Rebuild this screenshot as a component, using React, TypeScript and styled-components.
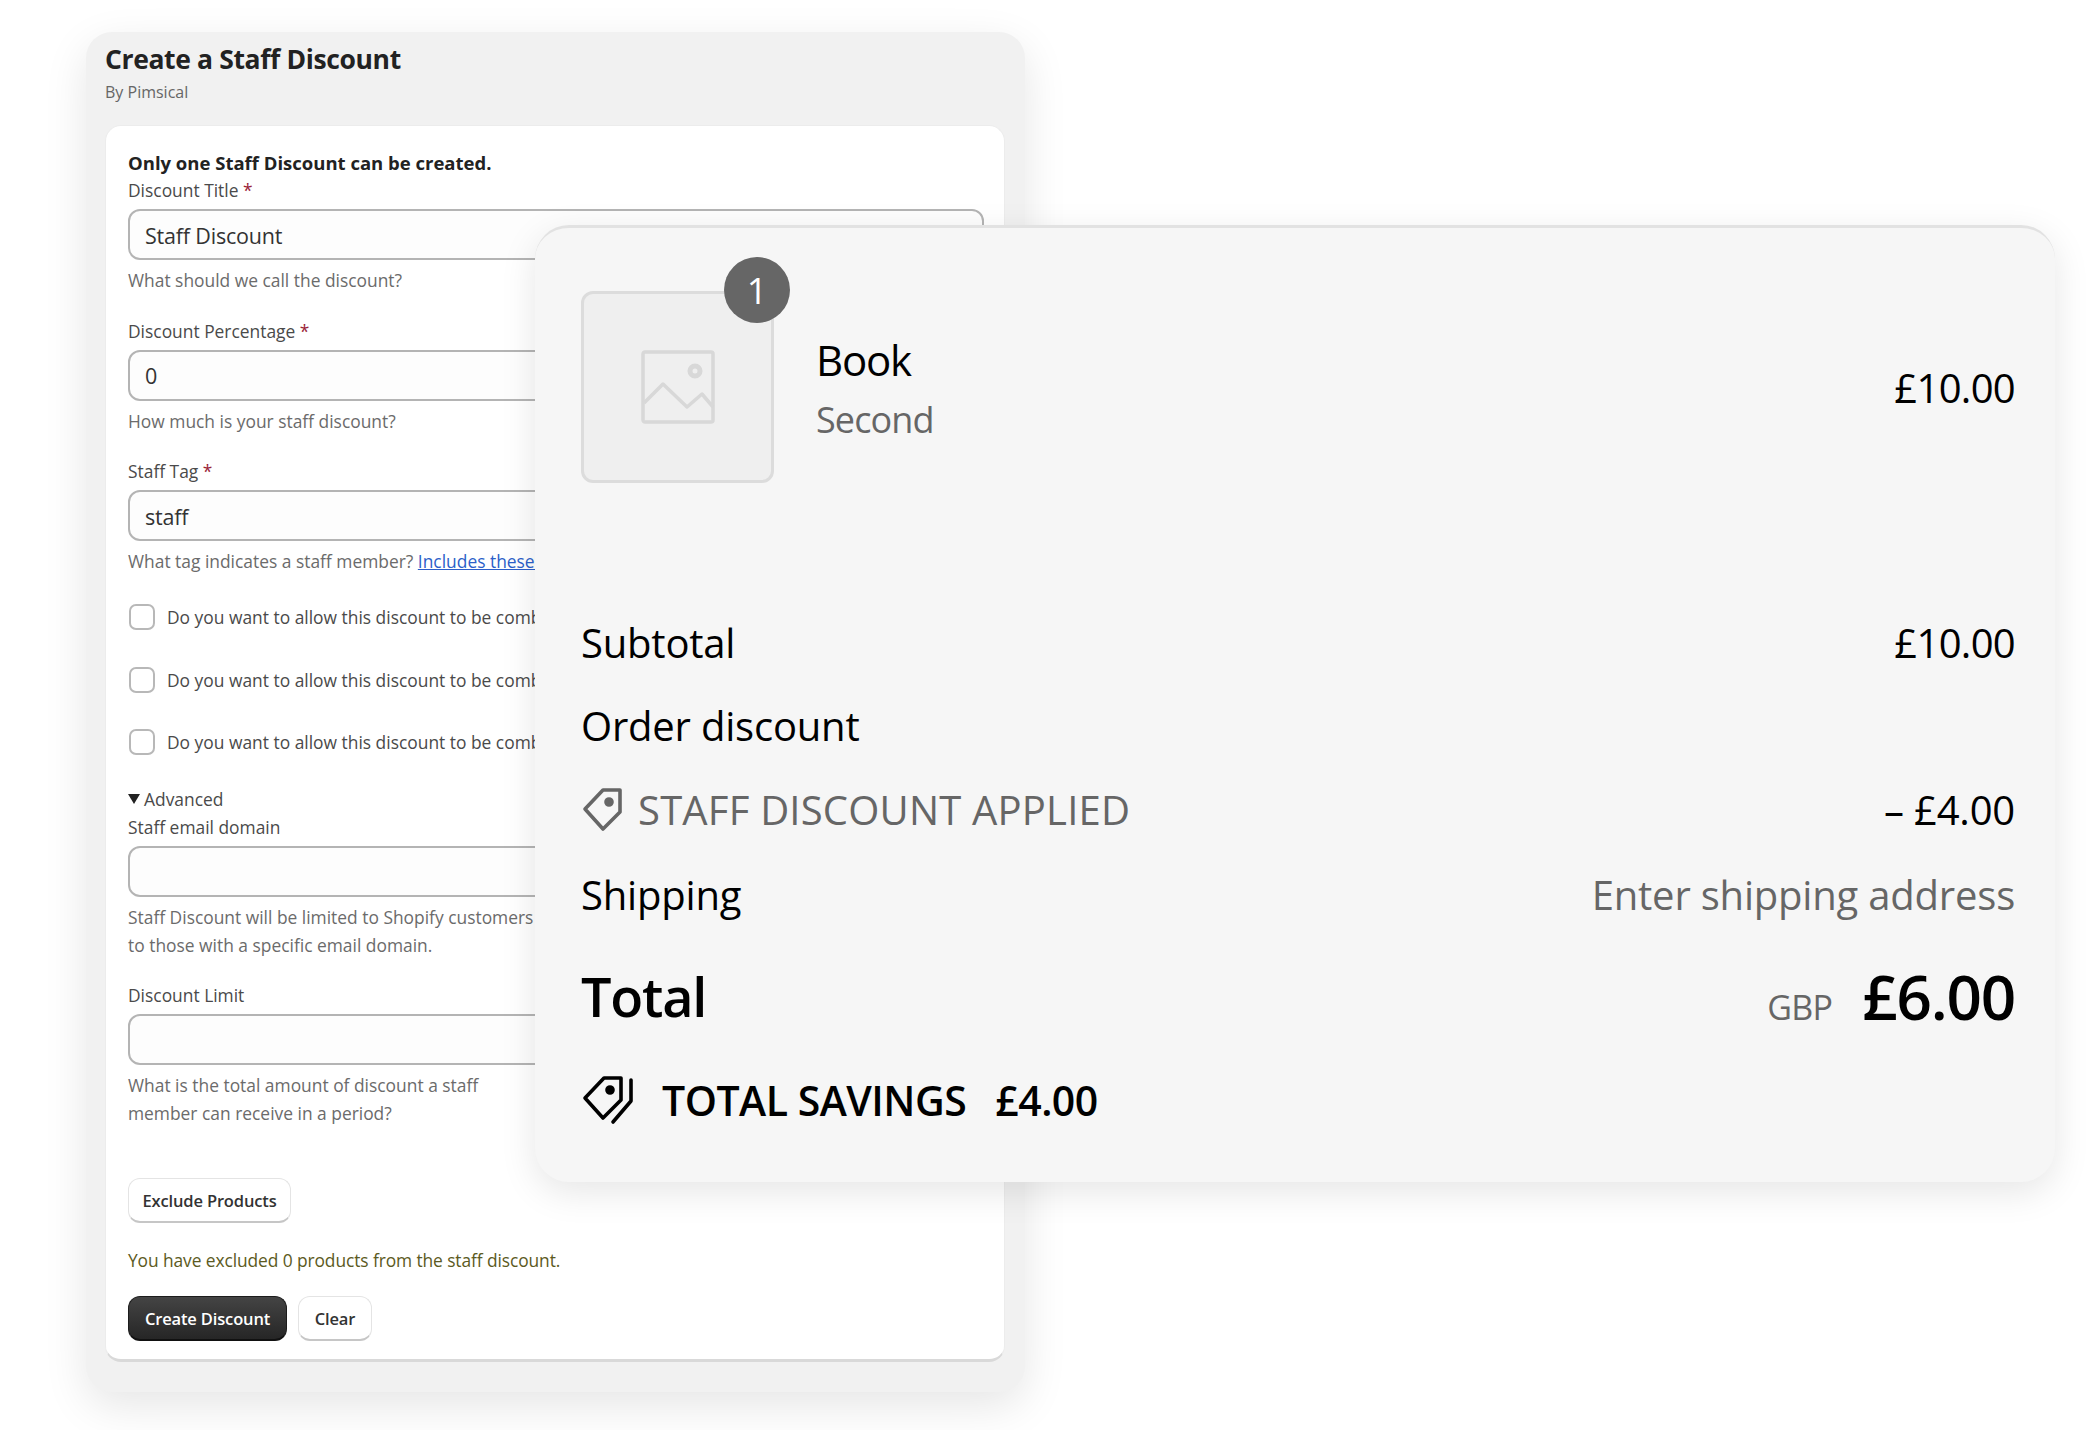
import React from "react";
import styled, { createGlobalStyle } from "styled-components";

const Global = createGlobalStyle`
  html, body { margin: 0; padding: 0; background: #fff; }
  body { font-family: "Open Sans", "Noto Sans", sans-serif; width: 2090px; height: 1430px; overflow: hidden; }
  * { box-sizing: border-box; }
`;

const Page = styled.div`
  position: relative;
  width: 2090px;
  height: 1430px;
  padding: 32px 0 0 86px;
  background: #fff;
`;

const Panel = styled.section`
  width: 939px;
  height: 1360px;
  padding: 10px 20px 0 19px;
  background: #f1f1f1;
  border-radius: 26px;
  box-shadow: 0 14px 44px rgba(0, 0, 0, 0.1);
`;

const Title = styled.h1`
  margin: 0;
  font-size: 26.5px;
  line-height: 34px;
  font-weight: 700;
  letter-spacing: -0.37px;
  color: #222;
`;

const By = styled.div`
  margin-top: 3px;
  font-size: 16px;
  line-height: 26px;
  color: #666;
`;

const Card = styled.div`
  margin-top: 20px;
  width: 900px;
  height: 1237px;
  padding: 23px 20px 0 22px;
  background: #fff;
  border-radius: 16px;
  border: 1px solid #ececec;
  border-bottom: 3px solid #d9d9d9;
`;

const Notice = styled.div`
  font-size: 18.5px;
  line-height: 27px;
  font-weight: 700;
  color: #222;
`;

const Field = styled.div<{ $gap?: number }>`
  margin-bottom: ${(p) => p.$gap ?? 22.5}px;
`;

const Label = styled.label`
  display: block;
  font-size: 17.4px;
  line-height: 28px;
  color: #4a4a4a;
`;

const Star = styled.span`
  color: #9a2338;
`;

const Input = styled.div`
  margin-top: 5px;
  height: 51px;
  padding: 1px 15px 0;
  display: flex;
  align-items: center;
  font-size: 21.5px;
  letter-spacing: -0.2px;
  color: #333;
  background: #fdfdfd;
  border: 2px solid #b4b4b4;
  border-radius: 12px;
`;

const Help = styled.div`
  margin-top: 6px;
  font-size: 17.4px;
  line-height: 28px;
  color: #6b6b6b;
`;

const Link = styled.a`
  color: #2c5fc9;
  text-decoration: underline;
`;

const CheckRow = styled.div`
  display: flex;
  align-items: center;
  gap: 12px;
  height: 30px;
  margin: 0 0 32.5px 1px;
  font-size: 17.4px;
  color: #4a4a4a;
  white-space: nowrap;
`;

const Box = styled.span`
  flex: none;
  width: 26px;
  height: 26px;
  background: #fff;
  border: 2px solid #b8b8b8;
  border-radius: 7px;
`;

const Summary = styled.div`
  display: flex;
  align-items: center;
  gap: 4px;
  margin: -5px 0 0;
  font-size: 17.4px;
  line-height: 28px;
  color: #4a4a4a;
`;

const Caret = styled.span`
  width: 0;
  height: 0;
  border-left: 6px solid transparent;
  border-right: 6px solid transparent;
  border-top: 10px solid #222;
`;

const Btn = styled.button<{ $dark?: boolean; $w: number }>`
  display: block;
  flex: none;
  width: ${(p) => p.$w}px;
  height: 45px;
  padding: 0;
  font-family: inherit;
  font-size: 16.5px;
  font-weight: 600;
  letter-spacing: -0.15px;
  border-radius: 12px;
  color: ${(p) => (p.$dark ? "#fff" : "#333")};
  background: ${(p) => (p.$dark ? "linear-gradient(#444, #262626)" : "#fff")};
  border: ${(p) => (p.$dark ? "1px solid #1c1c1c" : "1px solid #e4e4e4")};
  border-bottom: ${(p) => (p.$dark ? "2px solid #111" : "2px solid #c6c6c6")};
`;

const Excluded = styled.div`
  margin: 23px 0 22px;
  font-size: 17.4px;
  line-height: 28px;
  letter-spacing: -0.1px;
  color: #5c5a22;
`;

const BtnRow = styled.div`
  display: flex;
  gap: 11px;
`;

const Overlay = styled.aside`
  position: absolute;
  left: 535px;
  top: 225px;
  width: 1520px;
  height: 957px;
  padding: 63px 40px 0 46px;
  background: #f6f6f6;
  border-top: 3px solid #e2e2e2;
  border-radius: 34px;
  box-shadow: 0 10px 36px rgba(0, 0, 0, 0.1);
  color: #000;
`;

const Item = styled.div`
  display: flex;
  align-items: center;
  height: 192px;
`;

const Thumb = styled.div`
  position: relative;
  flex: none;
  width: 193px;
  height: 192px;
  display: flex;
  align-items: center;
  justify-content: center;
  background: #efefef;
  border: 3px solid #dcdcdc;
  border-radius: 12px;
`;

const Badge = styled.span`
  position: absolute;
  top: -37px;
  right: -19px;
  width: 66px;
  height: 66px;
  display: flex;
  align-items: center;
  justify-content: center;
  border-radius: 50%;
  background: #666;
  color: #fff;
  font-size: 36px;
`;

const ItemText = styled.div`
  margin-left: 42px;
  padding-top: 6px;
  flex: 1;
`;

const ItemName = styled.div`
  font-size: 42px;
  line-height: 60px;
  letter-spacing: -1.2px;
`;

const ItemVariant = styled.div`
  font-size: 36px;
  line-height: 60px;
  letter-spacing: -0.9px;
  color: #666;
`;

const ItemPrice = styled.span`
  font-size: 40px;
  letter-spacing: -0.7px;
`;

const Rows = styled.div`
  margin-top: 118px;
`;

const Row = styled.div<{ $h: number }>`
  display: flex;
  align-items: center;
  justify-content: space-between;
  height: ${(p) => p.$h}px;
  font-size: 40px;
  letter-spacing: -0.2px;
`;

const Price = styled.span`
  letter-spacing: -0.7px;
`;

const Muted = styled.span`
  color: #666;
`;

const RowLabel = styled.span`
  display: flex;
  align-items: center;
  gap: 16px;
  color: #666;
  letter-spacing: 0.2px;
`;

const TotalLabel = styled.span`
  font-size: 54px;
  font-weight: 600;
  letter-spacing: -1.2px;
`;

const TotalValue = styled.span`
  display: flex;
  align-items: baseline;
  gap: 30px;
`;

const Currency = styled.span`
  font-size: 34px;
  letter-spacing: -0.7px;
  color: #666;
`;

const TotalPrice = styled.span`
  font-size: 62px;
  font-weight: 600;
  letter-spacing: -1.2px;
`;

const Savings = styled.div`
  display: flex;
  align-items: center;
  height: 60px;
  margin-top: 16px;
  font-size: 41px;
  font-weight: 600;
  letter-spacing: -0.5px;
`;

const SavingsLabel = styled.span`
  margin: 0 29px 0 29px;
`;

const ImageIcon = () => (
  <svg width="74" height="74" viewBox="0 0 74 74" fill="none" stroke="#d8d8d8" strokeWidth="3.5" strokeLinejoin="round">
    <rect x="2" y="2" width="70" height="70" rx="2" />
    <path d="M3 53 L22 34 L46 57 L61 44 L72 57" />
    <circle cx="54" cy="21" r="5" strokeWidth="5" />
  </svg>
);

const TagIcon = () => (
  <svg width="41" height="44" viewBox="0 0 41 44" fill="none" stroke="#666" strokeWidth="3.6" strokeLinejoin="round">
    <path d="M39 2 H22 L4 21 L22 41 L39 24 Z" />
    <circle cx="28" cy="14" r="3" fill="#666" />
  </svg>
);

const TagsIcon = () => (
  <svg width="52" height="49" viewBox="0 0 52 49" fill="none" stroke="#000" strokeWidth="3.6" strokeLinejoin="round" strokeLinecap="round">
    <path d="M40 2 H23 L4 22 L22 42 L40 24 Z" />
    <path d="M50 4 V25 L32 46" />
    <circle cx="29" cy="14" r="3" fill="#000" />
  </svg>
);

const comboText = "Do you want to allow this discount to be combined with other discounts?";

export default function App() {
  return (
    <Page>
      <Global />
      <Panel>
        <Title>Create a Staff Discount</Title>
        <By>By Pimsical</By>
        <Card>
          <Notice>Only one Staff Discount can be created.</Notice>
          <Field>
            <Label>Discount Title <Star>*</Star></Label>
            <Input>Staff Discount</Input>
            <Help>What should we call the discount?</Help>
          </Field>
          <Field>
            <Label>Discount Percentage <Star>*</Star></Label>
            <Input>0</Input>
            <Help>How much is your staff discount?</Help>
          </Field>
          <Field $gap={27}>
            <Label>Staff Tag <Star>*</Star></Label>
            <Input>staff</Input>
            <Help>What tag indicates a staff member? <Link>Includes these tags</Link></Help>
          </Field>
          <CheckRow><Box />{comboText}</CheckRow>
          <CheckRow><Box />{comboText}</CheckRow>
          <CheckRow><Box />{comboText}</CheckRow>
          <Summary><Caret />Advanced</Summary>
          <Field>
            <Label>Staff email domain</Label>
            <Input />
            <Help>
              Staff Discount will be limited to Shopify customers
              <br />
              to those with a specific email domain.
            </Help>
          </Field>
          <Field $gap={51}>
            <Label>Discount Limit</Label>
            <Input />
            <Help>
              What is the total amount of discount a staff
              <br />
              member can receive in a period?
            </Help>
          </Field>
          <Btn $w={163}>Exclude Products</Btn>
          <Excluded>You have excluded 0 products from the staff discount.</Excluded>
          <BtnRow>
            <Btn $dark $w={159}>Create Discount</Btn>
            <Btn $w={74}>Clear</Btn>
          </BtnRow>
        </Card>
      </Panel>
      <Overlay>
        <Item>
          <Thumb>
            <ImageIcon />
            <Badge>1</Badge>
          </Thumb>
          <ItemText>
            <ItemName>Book</ItemName>
            <ItemVariant>Second</ItemVariant>
          </ItemText>
          <ItemPrice>£10.00</ItemPrice>
        </Item>
        <Rows>
          <Row $h={83}>Subtotal<Price>£10.00</Price></Row>
          <Row $h={83}>Order discount</Row>
          <Row $h={85}>
            <RowLabel><TagIcon />STAFF DISCOUNT APPLIED</RowLabel>
            <span>– £4.00</span>
          </Row>
          <Row $h={85}>Shipping<Muted>Enter shipping address</Muted></Row>
          <Row $h={117}>
            <TotalLabel>Total</TotalLabel>
            <TotalValue><Currency>GBP</Currency><TotalPrice>£6.00</TotalPrice></TotalValue>
          </Row>
          <Savings>
            <TagsIcon />
            <SavingsLabel>TOTAL SAVINGS</SavingsLabel>
            £4.00
          </Savings>
        </Rows>
      </Overlay>
    </Page>
  );
}
